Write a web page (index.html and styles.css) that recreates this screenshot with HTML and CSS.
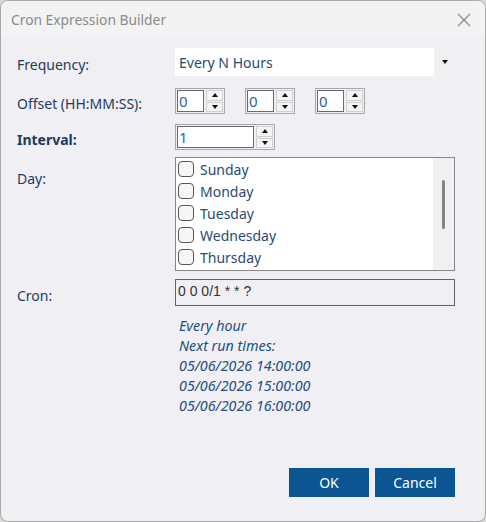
FILE: index.html
```html
<!DOCTYPE html>
<html>
<head>
<meta charset="utf-8">
<link rel="stylesheet" href="styles.css">
</head>
<body>
<div class="window">
  <div class="titlebar">
    <span class="title">Cron Expression Builder</span>
    <svg class="close" width="14" height="14" viewBox="0 0 14 14"><path d="M1 1L13 13M13 1L1 13" stroke="#8a8a8a" stroke-width="1.2" fill="none"/></svg>
  </div>
  <div class="content">
    <div class="row row-freq">
      <div class="label">Frequency:</div>
      <div class="combo">
        <span class="combo-text">Every N Hours</span>
        <span class="combo-btn"><span class="tri-down"></span></span>
      </div>
    </div>
    <div class="row row-offset">
      <div class="label">Offset (HH:MM:SS):</div>
      <div class="spins">
        <div class="spin"><div class="spin-field">0</div><div class="spin-btns"><span class="sb"><span class="tri-up"></span></span><span class="sb"><span class="tri-down"></span></span></div></div>
        <div class="spin"><div class="spin-field">0</div><div class="spin-btns"><span class="sb"><span class="tri-up"></span></span><span class="sb"><span class="tri-down"></span></span></div></div>
        <div class="spin"><div class="spin-field">0</div><div class="spin-btns"><span class="sb"><span class="tri-up"></span></span><span class="sb"><span class="tri-down"></span></span></div></div>
      </div>
    </div>
    <div class="row row-interval">
      <div class="label bold">Interval:</div>
      <div class="spin spin-wide"><div class="spin-field">1</div><div class="spin-btns"><span class="sb"><span class="tri-up"></span></span><span class="sb"><span class="tri-down"></span></span></div></div>
    </div>
    <div class="row row-day">
      <div class="label label-top">Day:</div>
      <div class="listbox">
        <div class="items">
          <div class="item"><span class="check"></span>Sunday</div>
          <div class="item"><span class="check"></span>Monday</div>
          <div class="item"><span class="check"></span>Tuesday</div>
          <div class="item"><span class="check"></span>Wednesday</div>
          <div class="item"><span class="check"></span>Thursday</div>
          <div class="item"><span class="check"></span>Friday</div>
          <div class="item"><span class="check"></span>Saturday</div>
        </div>
        <div class="scrollbar"><div class="thumb"></div></div>
      </div>
    </div>
    <div class="row row-cron">
      <div class="label">Cron:</div>
      <div class="cronbox">0 0 0/1 * * ?</div>
    </div>
    <div class="info">
      <div>Every hour</div>
      <div>Next run times:</div>
      <div>05/06/2026 14:00:00</div>
      <div>05/06/2026 15:00:00</div>
      <div>05/06/2026 16:00:00</div>
    </div>
    <div class="buttons">
      <button class="btn">OK</button>
      <button class="btn">Cancel</button>
    </div>
  </div>
</div>
</body>
</html>
```

FILE: styles.css
```css
html, body {
  margin: 0;
  padding: 0;
  background: #d8d8d8;
}
body {
  width: 486px;
  height: 522px;
  overflow: hidden;
  font-family: "Noto Sans", "Open Sans", sans-serif;
}
.window {
  box-sizing: border-box;
  width: 486px;
  height: 522px;
  border: 1px solid #a9a9a9;
  border-radius: 8px;
  background: #f0f0f4;
  overflow: hidden;
  display: flex;
  flex-direction: column;
}
.titlebar {
  height: 36px;
  flex: none;
  background: #f3f3f3;
  display: flex;
  align-items: center;
  justify-content: space-between;
  padding: 0 14px 0 10px;
}
.title {
  font-size: 13.8px;
  color: #8a8a8a;
  padding-top: 1px;
}
.close {
  display: block;
  margin-top: 1px;
}
.content {
  flex: 1;
  padding: 11px 30px 0 16px;
  display: flex;
  flex-direction: column;
}
.row {
  display: flex;
  align-items: center;
}
.label {
  width: 158px;
  flex: none;
  font-size: 14px;
  color: #1f3a5e;
  padding-top: 5px;
}
.label.bold {
  font-weight: bold;
}
.row-day {
  align-items: flex-start;
}
.label-top {
  padding-top: 12px;
}
.combo {
  width: 280px;
  height: 28px;
  background: #ffffff;
  display: flex;
  align-items: center;
  justify-content: space-between;
}
.combo-text {
  font-size: 14px;
  color: #2a4a72;
  padding-left: 4px;
}
.combo-btn {
  width: 21px;
  height: 28px;
  background: #f0f0f0;
  display: flex;
  align-items: center;
  justify-content: center;
}
.tri-down {
  width: 0;
  height: 0;
  border-left: 3.5px solid transparent;
  border-right: 3.5px solid transparent;
  border-top: 4px solid #111;
}
.tri-up {
  width: 0;
  height: 0;
  border-left: 3.5px solid transparent;
  border-right: 3.5px solid transparent;
  border-bottom: 4px solid #111;
}
.row-offset {
  margin-top: 12px;
}
.spins {
  display: flex;
  gap: 20px;
}
.spin {
  box-sizing: border-box;
  width: 50px;
  height: 26px;
  border: 1px solid #a8a8a8;
  padding: 1px;
  display: flex;
  gap: 2px;
}
.spin-wide {
  width: 100px;
}
.spin-field {
  box-sizing: border-box;
  flex: 1;
  height: 22px;
  border: 1px solid #6a6a6a;
  background: #ffffff;
  font-size: 15px;
  line-height: 20px;
  color: #2a63a8;
  padding-left: 1px;
}
.spin-btns {
  width: 17px;
  display: flex;
  flex-direction: column;
  gap: 1px;
}
.sb {
  flex: 1;
  box-sizing: border-box;
  border: 1px solid #d0d0d0;
  background: #f4f4f4;
  display: flex;
  align-items: center;
  justify-content: center;
}
.row-interval {
  margin-top: 10px;
}
.row-day {
  margin-top: 7px;
}
.listbox {
  box-sizing: border-box;
  width: 280px;
  height: 114px;
  border: 1px solid #858585;
  background: #ffffff;
  display: flex;
  overflow: hidden;
}
.items {
  flex: 1;
  padding: 0 0 0 2px;
  overflow: hidden;
}
.item {
  height: 22px;
  display: flex;
  align-items: center;
  gap: 6px;
  font-size: 14px;
  color: #2a4a72;
}
.check {
  box-sizing: border-box;
  width: 16px;
  height: 16px;
  border: 1px solid #555;
  border-radius: 4px;
  background: #f6f6f6;
}
.scrollbar {
  width: 21px;
  background: #f0f0f0;
  display: flex;
  justify-content: center;
  padding-top: 22px;
  box-sizing: border-box;
}
.thumb {
  width: 3px;
  height: 49px;
  border-radius: 2px;
  background: #858585;
}
.row-cron {
  margin-top: 8px;
}
.cronbox {
  box-sizing: border-box;
  width: 280px;
  height: 27px;
  border: 1px solid #646464;
  font-family: "Liberation Sans", Arial, sans-serif;
  font-size: 14px;
  line-height: 17px;
  color: #333;
  padding: 3px 0 0 2px;
}
.info {
  margin-top: 10px;
  margin-left: 162px;
  font-size: 14.3px;
  font-style: italic;
  color: #244d80;
  line-height: 20px;
}
.buttons {
  margin-top: auto;
  margin-bottom: 24px;
  display: flex;
  justify-content: flex-end;
  gap: 6px;
}
.btn {
  width: 80px;
  height: 29px;
  border: none;
  background: #0a5592;
  color: #ffffff;
  font-family: "Noto Sans", "Open Sans", sans-serif;
  font-size: 14px;
  padding: 0;
}
```
